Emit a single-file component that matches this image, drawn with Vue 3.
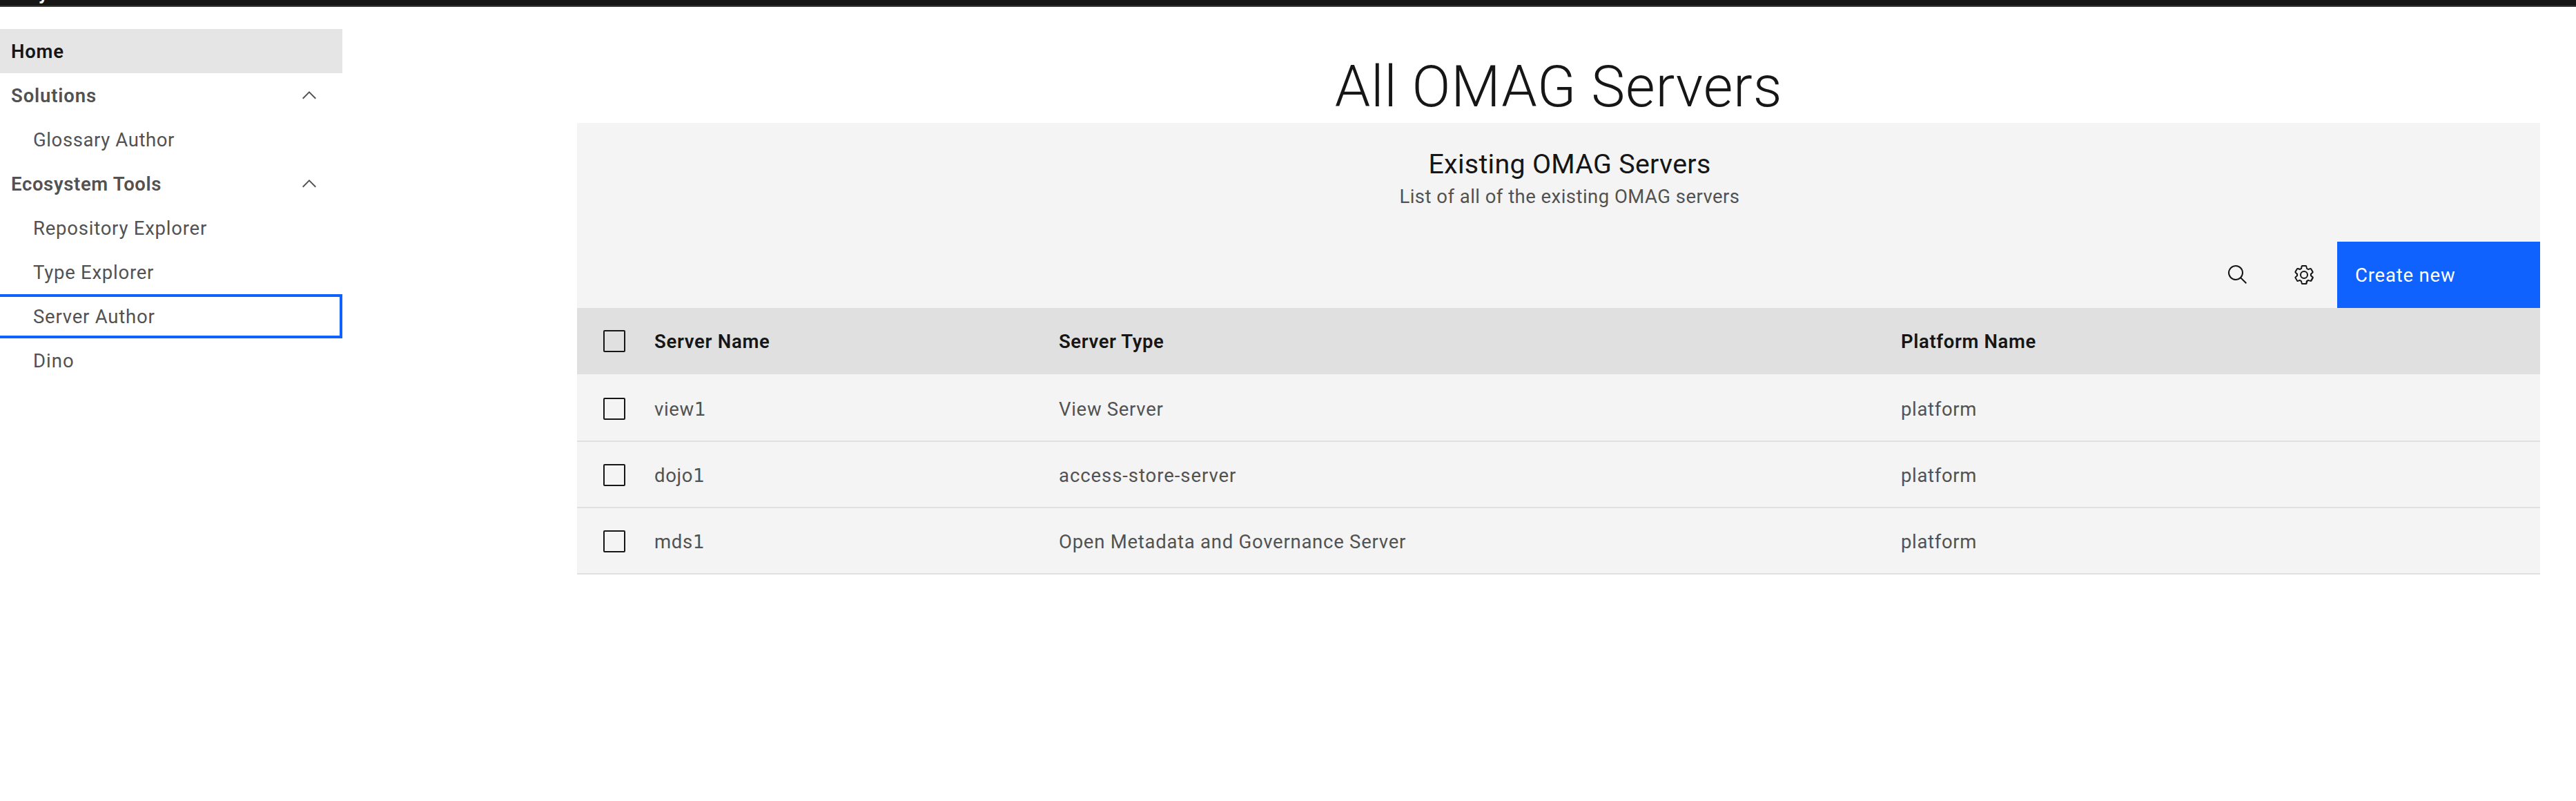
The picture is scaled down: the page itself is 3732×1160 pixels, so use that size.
<script setup>
const nav = [
  { label: 'Home', kind: 'current', track: 0.75 },
  { label: 'Solutions', kind: 'group', track: 0.85 },
  { label: 'Glossary Author', kind: 'sub', track: 0.6 },
  { label: 'Ecosystem Tools', kind: 'group', track: 0.65 },
  { label: 'Repository Explorer', kind: 'sub', track: 0.77 },
  { label: 'Type Explorer', kind: 'sub', track: 0.75 },
  { label: 'Server Author', kind: 'sub focused', track: 0.78 },
  { label: 'Dino', kind: 'sub', track: 1.03 },
]
const columns = [
  { label: 'Server Name', track: 0.7 },
  { label: 'Server Type', track: 0.58 },
  { label: 'Platform Name', track: 0.63 },
]
const servers = [
  { name: 'view', index: 1, type: 'View Server', track: 0.7, platform: 'platform' },
  { name: 'dojo', index: 1, type: 'access-store-server', track: 0.93, platform: 'platform' },
  { name: 'mds', index: 1, type: 'Open Metadata and Governance Server', track: 0.74, platform: 'platform' },
]
</script>

<template>
  <div class="page">
    <header class="topbar"><span>y</span></header>
    <div class="body">
      <nav class="sidebar">
        <a v-for="item in nav" :key="item.label" class="item" :class="item.kind">
          <span :style="{ letterSpacing: item.track + 'px' }">{{ item.label }}</span>
          <svg v-if="item.kind === 'group'" class="chevron" viewBox="0 0 16 16">
            <path d="M8 5L13 10 12.3 10.7 8 6.4 3.7 10.7 3 10z" />
          </svg>
        </a>
      </nav>
      <main class="main">
        <h1>All OMAG Servers</h1>
        <section class="panel">
          <div class="heading">
            <h4>Existing OMAG Servers</h4>
            <p>List of all of the existing OMAG servers</p>
          </div>
          <div class="toolbar">
            <button class="tool" aria-label="Search">
              <svg viewBox="0 0 32 32">
                <path d="M29,27.5859l-7.5521-7.5521a11.0177,11.0177,0,1,0-1.4141,1.4141L27.5859,29ZM4,13a9,9,0,1,1,9,9A9.01,9.01,0,0,1,4,13Z" />
              </svg>
            </button>
            <button class="tool" aria-label="Settings">
              <svg viewBox="0 0 16 16">
                <path d="M13.5,8.4c0-0.1,0-0.3,0-0.4c0-0.1,0-0.3,0-0.4l1-0.8c0.4-0.3,0.4-0.9,0.2-1.3l-1.2-2C13.3,3.2,13,3,12.6,3c-0.1,0-0.2,0-0.3,0.1l-1.2,0.4c-0.2-0.1-0.4-0.3-0.7-0.4l-0.3-1.3C10.1,1.3,9.7,1,9.2,1H6.8c-0.5,0-0.9,0.3-1,0.8L5.6,3.1C5.3,3.2,5.1,3.3,4.9,3.4L3.7,3C3.6,3,3.5,3,3.4,3C3,3,2.7,3.2,2.5,3.5l-1.2,2C1.1,5.9,1.2,6.4,1.6,6.8l0.9,0.9c0,0.1,0,0.3,0,0.4c0,0.1,0,0.3,0,0.4L1.6,9.2c-0.4,0.3-0.5,0.9-0.2,1.3l1.2,2C2.7,12.8,3,13,3.4,13c0.1,0,0.2,0,0.3-0.1l1.2-0.4c0.2,0.1,0.4,0.3,0.7,0.4l0.3,1.3c0.1,0.5,0.5,0.8,1,0.8h2.4c0.5,0,0.9-0.3,1-0.8l0.3-1.3c0.2-0.1,0.4-0.2,0.7-0.4l1.2,0.4c0.1,0,0.2,0.1,0.3,0.1c0.4,0,0.7-0.2,0.9-0.5l1.1-2c0.2-0.4,0.2-0.9-0.2-1.3L13.5,8.4z M12.6,12l-1.7-0.6c-0.4,0.3-0.9,0.6-1.4,0.8L9.2,14H6.8l-0.4-1.8c-0.5-0.2-0.9-0.5-1.4-0.8L3.4,12l-1.2-2l1.4-1.2c-0.1-0.5-0.1-1.1,0-1.6L2.2,6l1.2-2l1.7,0.6C5.5,4.2,6,4,6.5,3.8L6.8,2h2.4l0.4,1.8c0.5,0.2,0.9,0.5,1.4,0.8L12.6,4l1.2,2l-1.4,1.2c0.1,0.5,0.1,1.1,0,1.6l1.4,1.2L12.6,12z" />
                <circle class="hub" cx="8" cy="8" r="2.5" />
              </svg>
            </button>
            <button class="create">Create new</button>
          </div>
          <div class="row head">
            <i class="box"></i>
            <span v-for="col in columns" :key="col.label" :style="{ letterSpacing: col.track + 'px' }">{{ col.label }}</span>
          </div>
          <div v-for="s in servers" :key="s.name" class="row data">
            <i class="box"></i>
            <span>{{ s.name }}<b class="digit">{{ s.index }}</b></span>
            <span :style="{ letterSpacing: s.track + 'px' }">{{ s.type }}</span>
            <span>{{ s.platform }}</span>
          </div>
        </section>
      </main>
    </div>
  </div>
</template>

<style>
body {
  margin: 0;
  background: #fff;
}
</style>

<style scoped>
.page {
  height: 1160px;
  overflow: hidden;
  font-family: Roboto, "Liberation Sans", sans-serif;
  font-size: 27.5px;
  color: #525252;
}
.topbar {
  box-sizing: border-box;
  display: flex;
  align-items: flex-end;
  height: 10px;
  padding-left: 56px;
  overflow: hidden;
  background: #161616;
  border-bottom: 2px solid #393939;
  color: #fff;
  line-height: 24px;
}
.topbar span {
  font-weight: 600;
  margin-bottom: 6px;
}
.body {
  display: flex;
}
.sidebar {
  width: 496px;
  padding-top: 32px;
}
.item {
  box-sizing: border-box;
  display: flex;
  align-items: center;
  justify-content: space-between;
  height: 64px;
  padding: 1px 32px 0 16px;
  white-space: nowrap;
}
.group,
.current {
  font-weight: 600;
}
.current {
  background: #e5e5e5;
  color: #161616;
}
.sub {
  padding-left: 48px;
}
.focused {
  border: 4px solid #0f62fe;
  border-left: 0;
}
.chevron {
  width: 32px;
  height: 32px;
  margin-top: -1px;
  fill: #525252;
}
.main {
  width: 2844px;
  margin-left: 340px;
}
h1 {
  box-sizing: border-box;
  height: 168px;
  margin: 0;
  padding-top: 67px;
  text-align: center;
  font-size: 82.5px;
  font-weight: 300;
  line-height: 98px;
  letter-spacing: 0.8px;
  color: #161616;
}
.panel {
  background: #f4f4f4;
}
.heading {
  box-sizing: border-box;
  height: 172px;
  padding: 32px 0 0 32px;
  text-align: center;
}
h4 {
  margin: 0;
  font-size: 39.4px;
  font-weight: 400;
  line-height: 56px;
  letter-spacing: 0.28px;
  color: #161616;
}
p {
  margin: 0;
  line-height: 37px;
  letter-spacing: 0.46px;
}
.toolbar {
  display: flex;
  justify-content: flex-end;
  height: 96px;
}
button {
  border: 0;
  padding: 0;
  background: none;
  font: inherit;
}
.tool {
  display: flex;
  align-items: center;
  justify-content: center;
  width: 96px;
}
.tool svg {
  width: 32px;
  height: 32px;
  fill: #161616;
}
.tool .hub {
  fill: none;
  stroke: #161616;
}
.create {
  width: 294px;
  padding: 1px 0 0 26px;
  background: #0f62fe;
  color: #fff;
  text-align: left;
  letter-spacing: 0.81px;
}
.row {
  box-sizing: border-box;
  display: grid;
  grid-template-columns: 74px 586px 1220px 1fr;
  align-items: center;
  height: 96px;
  padding-left: 38px;
  white-space: nowrap;
}
.row span {
  padding-top: 1px;
  letter-spacing: 0.65px;
}
.head {
  background: #e0e0e0;
  color: #161616;
  font-weight: 600;
}
.data {
  padding-top: 2px;
  border-bottom: 2px solid #e0e0e0;
}
.head + .data {
  height: 98px;
  padding-top: 4px;
}
.data span {
  line-height: 32px;
}
.digit {
  font-family: "DejaVu Sans", sans-serif;
  font-size: 26.8px;
  font-weight: 400;
  letter-spacing: 0;
}
.box {
  box-sizing: border-box;
  width: 32px;
  height: 32px;
  border: 2px solid #161616;
  border-radius: 2px;
}
</style>
